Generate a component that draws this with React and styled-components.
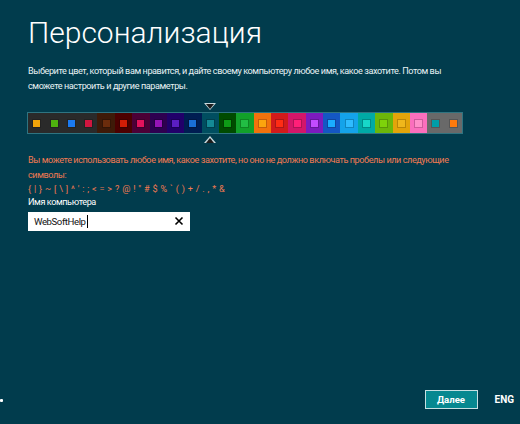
import React from "react";
import styled, { createGlobalStyle, css } from "styled-components";

const GlobalStyle = createGlobalStyle`
  html, body {
    margin: 0;
    padding: 0;
    background: #013c4d;
  }
  body {
    font-family: Roboto, "Noto Sans", sans-serif;
  }
`;

const bodyText = css`
  font-family: Roboto, sans-serif;
  font-size: 9.1px;
  letter-spacing: -0.42px;
  word-spacing: 0px;
`;

const colors = [
  { bg: "#2a2a2a", sq: "#f0a30a" },
  { bg: "#2a2a2a", sq: "#4fb10f" },
  { bg: "#2a2a2a", sq: "#1b7af0" },
  { bg: "#2a2a2a", sq: "#d0163f" },
  { bg: "#3e1a08", sq: "#6b2c0c" },
  { bg: "#4c0000", sq: "#d21d06" },
  { bg: "#4b0036", sq: "#e2135c" },
  { bg: "#2e0050", sq: "#9614b6" },
  { bg: "#21006a", sq: "#5a1ec2" },
  { bg: "#001d52", sq: "#1a6fd6" },
  { bg: "#004e60", sq: "#148a96", selected: true },
  { bg: "#004b00", sq: "#0e9a16" },
  { bg: "#12a12a", sq: "#22bd44" },
  { bg: "#f2720c", sq: "#fba50e" },
  { bg: "#d21b1b", sq: "#ff2d14" },
  { bg: "#d31669", sq: "#ff1f78" },
  { bg: "#7c1bbe", sq: "#c24bff" },
  { bg: "#1457c4", sq: "#1aadff" },
  { bg: "#14a3ea", sq: "#2fbcff" },
  { bg: "#00aaa6", sq: "#17d8c9" },
  { bg: "#6cb70a", sq: "#7ed20a" },
  { bg: "#e4a40a", sq: "#f0b71c" },
  { bg: "#fb6fbd", sq: "#ff8fc9" },
  { bg: "#696969", sq: "#009da7" },
  { bg: "#696969", sq: "#ff7a0c" },
];

const App = () => {
  return (
    <Page>
      <GlobalStyle />
      <Content>
        <Title>Персонализация</Title>
        <Description>
          Выберите цвет, который вам нравится, и дайте своему компьютеру любое имя, какое захотите. Потом вы
          <br />
          сможете настроить и другие параметры.
        </Description>
        <Palette>
          {colors.map((c, i) => (
            <Cell key={i} $bg={c.bg}>
              <Swatch $color={c.sq} />
              {c.selected ? (
                <>
                  <ArrowDown />
                  <ArrowUp />
                </>
              ) : null}
            </Cell>
          ))}
        </Palette>
        <Warning>
          Вы можете использовать любое имя, какое захотите, но оно не должно включать пробелы или следующие
          <br />
          символы:
          <Symbols>{'{ | } ~ [ \\ ] ^ \' : ; < = > ? @ ! " # $ % ` ( ) + / . , * &'}</Symbols>
        </Warning>
        <Label>Имя компьютера</Label>
        <InputBox>
          <InputText>WebSoftHelp</InputText>
          <Caret />
          <ClearIcon viewBox="0 0 10 10">
            <path d="M1.5 1.5 L8.5 8.5 M8.5 1.5 L1.5 8.5" stroke="#000" strokeWidth="1.6" />
          </ClearIcon>
        </InputBox>
      </Content>
      <Footer>
        <Dot />
        <NextButton>Далее</NextButton>
        <Lang>ENG</Lang>
      </Footer>
    </Page>
  );
};

export default App;

const Page = styled.div`
  width: 520px;
  height: 424px;
  display: flex;
  flex-direction: column;
  background: #013c4d;
  overflow: hidden;
`;

const Content = styled.div`
  display: flex;
  flex-direction: column;
  padding: 14px 28px 0px 28px;
`;

const Title = styled.h1`
  margin: 0px;
  font-family: Roboto, sans-serif;
  font-weight: 300;
  font-size: 30px;
  line-height: 38px;
  color: #ffffff;
  white-space: nowrap;
`;

const Description = styled.div`
  ${bodyText};
  margin: 12px 0px 0px 0px;
  line-height: 15px;
  color: #e8f2f4;
  white-space: nowrap;
`;

const Palette = styled.div`
  display: flex;
  width: 434px;
  height: 20px;
  margin: 19px 0px 0px 0px;
  outline: 1px solid #2f7481;
`;

const Cell = styled.div`
  position: relative;
  flex: 1;
  display: flex;
  align-items: center;
  justify-content: center;
  background: ${(props) => props.$bg};
`;

const Swatch = styled.div`
  width: 7px;
  height: 7px;
  background: ${(props) => props.$color};
  box-shadow: 0px 0px 0px 1px rgba(0, 0, 0, 0.18);
`;

const ArrowDown = styled.div`
  position: absolute;
  top: -10px;
  left: 50%;
  transform: translateX(-50%);
  width: 0;
  height: 0;
  border-left: 6px solid transparent;
  border-right: 6px solid transparent;
  border-top: 7px solid #c8d8dc;
  &::after {
    content: "";
    position: absolute;
    top: -6.5px;
    left: -4.5px;
    border-left: 4.5px solid transparent;
    border-right: 4.5px solid transparent;
    border-top: 5px solid #1c1c1c;
  }
`;

const ArrowUp = styled.div`
  position: absolute;
  bottom: -10px;
  left: 50%;
  transform: translateX(-50%);
  width: 0;
  height: 0;
  border-left: 6px solid transparent;
  border-right: 6px solid transparent;
  border-bottom: 7px solid #c8d8dc;
  &::after {
    content: "";
    position: absolute;
    bottom: -6.5px;
    left: -4.5px;
    border-left: 4.5px solid transparent;
    border-right: 4.5px solid transparent;
    border-bottom: 5px solid #1c1c1c;
  }
`;

const Warning = styled.div`
  ${bodyText};
  margin: 20px 0px 0px 0px;
  line-height: 14.5px;
  color: #f07a52;
  white-space: nowrap;
`;

const Symbols = styled.div`
  letter-spacing: 0.3px;
`;

const Label = styled.div`
  ${bodyText};
  margin: -1px 0px 0px 0px;
  line-height: 13px;
  color: #ffffff;
`;

const InputBox = styled.div`
  display: flex;
  align-items: center;
  width: 162px;
  height: 19px;
  margin: 3px 0px 0px 0px;
  padding: 0px 6px 0px 6px;
  box-sizing: border-box;
  background: #ffffff;
`;

const InputText = styled.span`
  ${bodyText};
  font-size: 9.6px;
  color: #111111;
`;

const Caret = styled.span`
  width: 1px;
  height: 13px;
  background: #000000;
  margin-left: 1px;
`;

const ClearIcon = styled.svg`
  width: 10px;
  height: 10px;
  margin-left: auto;
`;

const Footer = styled.div`
  margin-top: auto;
  display: flex;
  align-items: center;
  height: 18px;
  padding: 0px 6px 16px 0px;
`;

const Dot = styled.div`
  width: 3px;
  height: 3px;
  background: #ffffff;
  border-radius: 1px;
  margin-top: 2px;
`;

const NextButton = styled.button`
  margin-left: auto;
  width: 53px;
  height: 19px;
  padding: 0px;
  background: #068890;
  border: 1px solid #c6e0e2;
  color: #ffffff;
  font-family: Roboto, sans-serif;
  font-weight: 700;
  font-size: 9.6px;
`;

const Lang = styled.div`
  margin-left: 17px;
  font-family: Roboto, sans-serif;
  font-weight: 700;
  font-size: 10px;
  color: #ffffff;
`;
